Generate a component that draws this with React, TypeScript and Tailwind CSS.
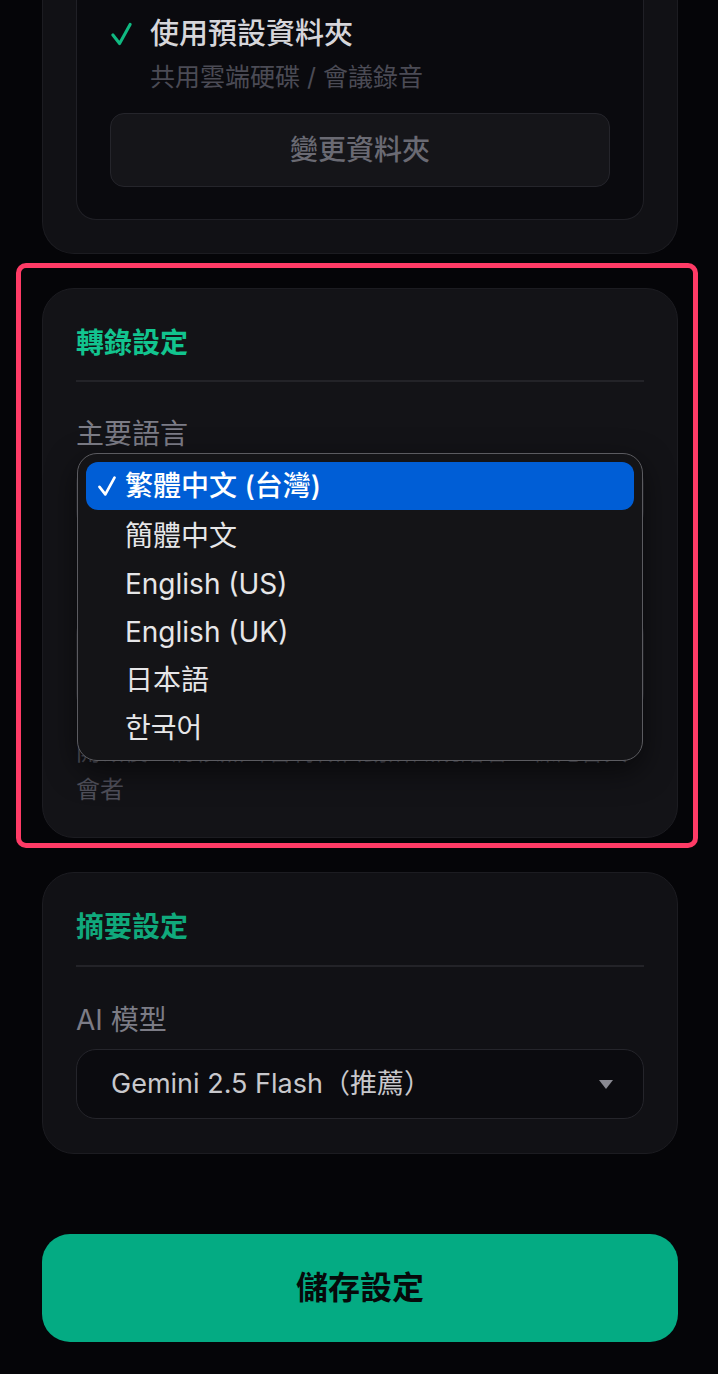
const languages = ['繁體中文 (台灣)', '簡體中文', 'English (US)', 'English (UK)', '日本語', '한국어']

function Check({ className }: { className: string }) {
  return (
    <svg viewBox="0 0 22 24" className={className} fill="none" stroke="currentColor" strokeWidth="3.2" strokeLinecap="round" strokeLinejoin="round">
      <path d="M2 13 L9 22 L20 2" />
    </svg>
  )
}

export default function App() {
  return (
    <main className="min-h-[1374px] bg-[#050508] pb-[32px] pl-[42px] pr-[40px] font-['Inter','Noto_Sans_CJK_TC',sans-serif] text-[#d4d4d8]">
      {/* storage card, scrolled past its top */}
      <section className="rounded-b-[32px] border border-t-0 border-[#1c1c21] bg-[#111115] px-[33px] pb-[33px]">
        <div className="rounded-b-[20px] border border-t-0 border-[#202026] bg-[#0a0a0e] px-[33px] pb-[32px] pt-[14px]">
          <div className="flex items-center">
            <span className="w-[40px] pl-[1px] text-[#10b981]">
              <Check className="h-[24px] w-[21px]" />
            </span>
            <span className="text-[29px] font-medium leading-[40px] text-[#d6d6da]">使用預設資料夾</span>
          </div>
          <p className="mt-[6px] pl-[40px] text-[25px] leading-[34px] text-[#4b4b55]">共用雲端硬碟 / 會議錄音</p>
          <button className="mt-[19px] flex h-[74px] w-full items-center justify-center rounded-[14px] border-[1.5px] border-[#25252b] bg-[#151519] text-[28px] font-medium text-[#6a6a73]">
            變更資料夾
          </button>
        </div>
      </section>

      {/* transcription card */}
      <div className="relative mt-[34px]">
        <section className="rounded-[32px] border border-[#1c1c21] bg-[#131317] px-[33px] pb-[28px] pt-[33px]">
          <h2 className="text-[28px] font-semibold leading-[42px] text-[#12c48f]">轉錄設定</h2>
          <div className="mt-[16px] h-[2px] bg-[#232328]" />
          <p className="mt-[32px] text-[28px] leading-[40px] text-[#7c7c86]">主要語言</p>
          <div className="relative mt-[9px]">
            {/* select and speaker toggle sit under the open list */}
            <div className="h-[69px] rounded-[20px] border-[1.5px] border-[#25252b] bg-[#0b0b0f]" />
            <div className="mt-[82px] flex h-[100px] items-center justify-end rounded-[20px] border-[1.5px] border-[#25252b] bg-[#0b0b0f] px-[34px]">
              <span className="h-[36px] w-[64px] rounded-full bg-[#10b981]" />
            </div>
            <p className="mt-[19px] text-[24px] leading-[38px] text-[#4f4f5a]">
              開啟後，將依照聲音特徵自動辨識說話者並標記各與會者
            </p>

            <div className="absolute left-[1px] right-[1px] top-[-10px] rounded-[20px] border-[1.5px] border-[#5b5b60] bg-[#141417] p-[8px] shadow-[0_10px_30px_rgba(0,0,0,0.55)]">
              {languages.map((lang, i) => (
                <div
                  key={lang}
                  className={
                    i === 0
                      ? 'mb-[2px] flex h-[48px] items-center rounded-[12px] bg-[#005ed6] pl-[11px] text-[28px] font-medium text-white'
                      : 'flex h-[48px] items-center pl-[39px] text-[28px] text-[#e6e6e8]'
                  }
                >
                  {i === 0 && (
                    <span className="w-[28px]">
                      <Check className="h-[20px] w-[20px]" />
                    </span>
                  )}
                  {lang}
                </div>
              ))}
            </div>
          </div>
        </section>
        {/* highlight frame */}
        <div className="pointer-events-none absolute -bottom-[10px] -left-[26px] -right-[20px] -top-[25px] rounded-[10px] border-[5px] border-[#ff3b66]" />
      </div>

      {/* summary card */}
      <section className="mt-[34px] rounded-[32px] border border-[#1c1c21] bg-[#111115] px-[33px] pb-[34px] pt-[33px]">
        <h2 className="text-[28px] font-semibold leading-[42px] text-[#10a97c]">摘要設定</h2>
        <div className="mt-[17px] h-[2px] bg-[#232328]" />
        <p className="mt-[33px] text-[28px] leading-[40px] text-[#7c7c86]">AI 模型</p>
        <div className="mt-[9px] flex h-[70px] items-center justify-between rounded-[20px] border-[1.5px] border-[#25252b] bg-[#0b0b0f] pl-[34px] pr-[30px]">
          <span className="text-[27px] text-[#c8c8cc]">Gemini 2.5 Flash（推薦）</span>
          <svg viewBox="0 0 14 9" className="h-[9px] w-[14px] text-[#8a8a92]" fill="currentColor">
            <path d="M0 0 H14 L7 9 Z" />
          </svg>
        </div>
      </section>

      <button className="mt-[80px] flex h-[108px] w-full items-center justify-center rounded-[28px] bg-[#04ab83] text-[32px] font-bold text-[#07090a]">
        儲存設定
      </button>
    </main>
  )
}
